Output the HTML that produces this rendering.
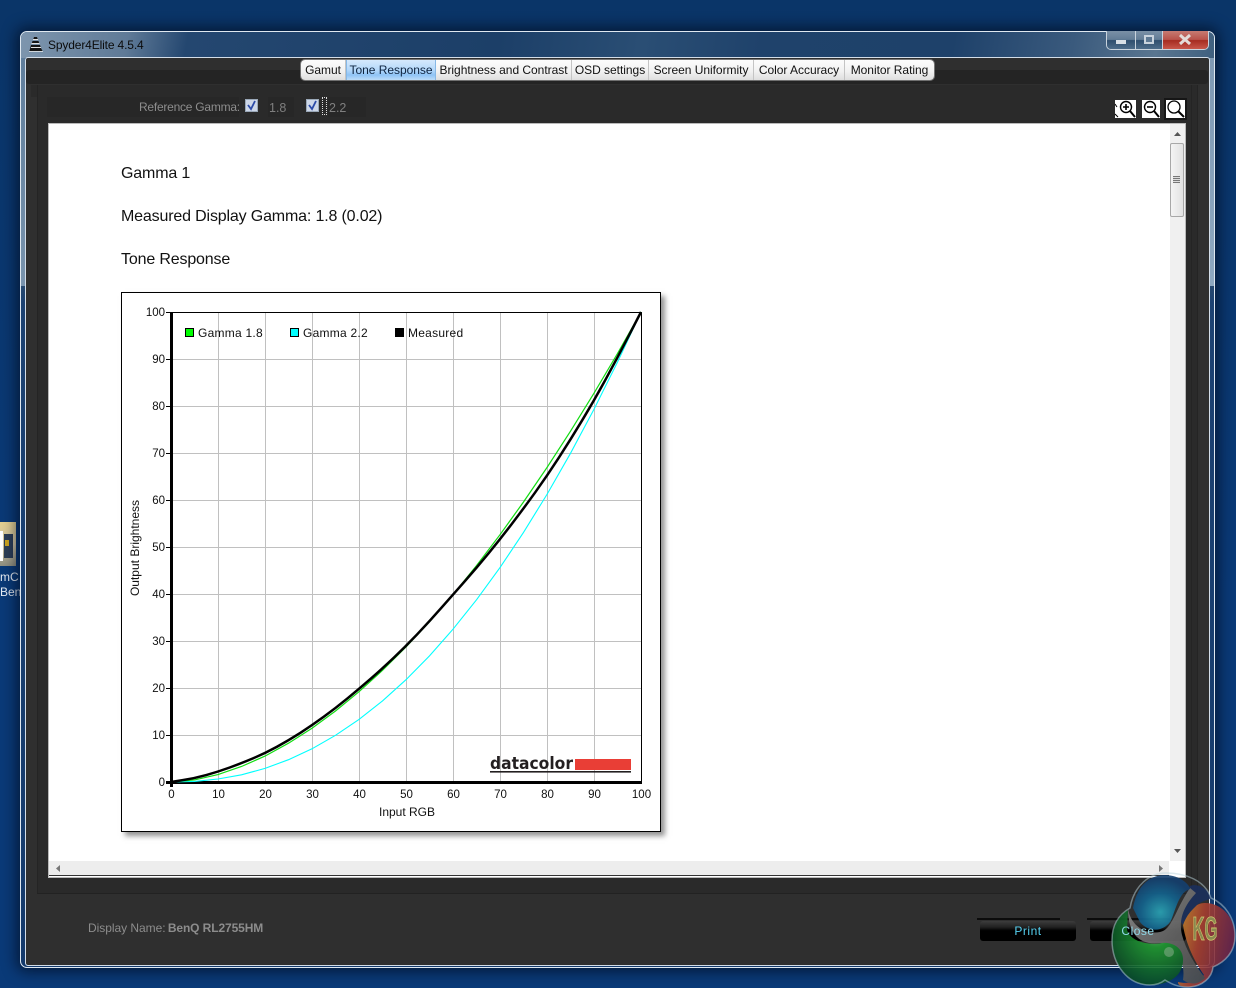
<!DOCTYPE html>
<html><head><meta charset="utf-8"><title>Spyder4Elite 4.5.4</title>
<style>
html,body{margin:0;padding:0;width:1236px;height:988px;overflow:hidden}
body{position:relative;background:linear-gradient(180deg,#0a3568 0,#0a3a78 60%,#0a3a78 100%);font-family:"Liberation Sans",sans-serif}
.a{position:absolute}
.t{position:absolute;white-space:nowrap}
.tab{position:absolute;top:0;height:20px;line-height:20px;text-align:center;font-size:12px;color:#111;letter-spacing:-.03px;border-right:1px solid #c4c4c4;box-sizing:border-box;background:linear-gradient(180deg,#fcfcfc 0,#f2f2f2 55%,#dedede 100%)}
.h{position:absolute;left:121px;font-size:16px;color:#111;white-space:nowrap;line-height:18px;letter-spacing:-.16px}
.zb{position:absolute;top:100px;height:18px;background:#fff}
</style></head><body>
<!-- icon on desktop -->
<div class="a" style="left:0;top:522px;width:16px;height:44px;background:linear-gradient(180deg,#e3cf8f,#cfc4a4 50%,#8f8f80)"></div>
<div class="a" style="left:0;top:531px;width:3px;height:30px;background:#fff"></div>
<div class="a" style="left:4px;top:534px;width:9px;height:24px;background:#2c3e56"></div>
<div class="a" style="left:5px;top:540px;width:4px;height:6px;background:#cda520"></div>
<div class="t" style="left:0;top:570px;font-size:12px;color:#e8eef5;line-height:14px">mC</div>
<div class="t" style="left:0;top:585px;font-size:12px;color:#e8eef5;line-height:14px">Ben</div>
<!-- window shadow -->
<div class="a" style="left:20px;top:31px;width:1195px;height:937px;border-radius:7px;box-shadow:0 0 14px 4px rgba(0,8,24,.62)"></div>
<!-- glass -->
<div class="a" style="left:20px;top:31px;width:1195px;height:937px;box-sizing:border-box;border-radius:7px;border:1px solid #dfe8f0;background:linear-gradient(180deg,#24476f 0,#27496f 27%,#1c4272 29%,#143a6c 100%)"></div>
<div class="a" style="left:21px;top:32px;width:1193px;height:26px;border-radius:6px 6px 0 0;background:linear-gradient(100deg,#7e96ae 0,#5f7a97 9%,#244770 14%,#1c3f68 40%,#2a4e74 52%,#1f426b 62%,#1e416a 78%,#3a5a7d 88%,#5a7690 95%,#3f607f 100%)"></div>
<div class="a" style="left:1209px;top:58px;width:5px;height:228px;background:linear-gradient(180deg,#7f9ab4,#8ea8c0)"></div>
<div class="a" style="left:21px;top:58px;width:4px;height:228px;background:linear-gradient(180deg,#5f7e9c,#7893ad)"></div>
<!-- title -->
<svg class="a" style="left:28px;top:36px" width="16" height="17" viewBox="0 0 16 17"><path d="M6 1h3l1 3H5zM4.500 5h6l1 3h-8zM3 9h9l1 3 2 4H1l1-3z" fill="#161616"/><path d="M5 3.500h5M3.500 7.500h8M3 11.500h10" stroke="#e2e2e2" stroke-width="1"/><path d="M1 15.500h14" stroke="#cfd6dc"/></svg>
<div class="t" style="left:48px;top:37px;font-size:12px;line-height:16px;color:#0b0b0b;letter-spacing:-.14px">Spyder4Elite 4.5.4</div>
<!-- window buttons -->
<div class="a" style="left:1106px;top:31px;width:103px;height:19px;border:1px solid #c9d3dd;border-top:0;box-sizing:border-box;border-radius:0 0 5px 5px;overflow:hidden;background:#456482">
 <div class="a" style="left:0;top:0;width:28px;height:18px;background:linear-gradient(180deg,#7a90a6 0,#627c96 48%,#2f4e6e 52%,#4d6c8a 100%);border-right:1px solid #c9d3dd"></div>
 <div class="a" style="left:29px;top:0;width:26px;height:18px;background:linear-gradient(180deg,#7a90a6 0,#627c96 48%,#2f4e6e 52%,#4d6c8a 100%);border-right:1px solid #c9d3dd"></div>
 <div class="a" style="left:56px;top:0;width:46px;height:18px;background:linear-gradient(180deg,#c77b72 0,#b9524a 48%,#a52b20 52%,#c8574a 100%)"></div>
 <div class="a" style="left:9px;top:9px;width:10px;height:4px;background:#d8dfe6"></div>
 <div class="a" style="left:37px;top:4px;width:6px;height:5px;border:2px solid #c8d2dc;background:#5d7893"></div>
 <svg class="a" style="left:71px;top:3px" width="14" height="11"><path d="M2 1l10 9M12 1L2 10" stroke="#e4dcd8" stroke-width="3"/></svg>
</div>
<!-- client -->
<div class="a" style="left:26px;top:58px;width:1183px;height:907px;box-sizing:border-box;background:#2f2f2f;outline:1px solid #d3dde8;border-radius:2px"></div>
<div class="a" style="left:26px;top:70px;width:1182px;height:14px;background:#242424;border-radius:3px"></div>
<div class="a" style="left:31px;top:85px;width:1161px;height:12px;background:#2a2a2a"></div>
<div class="a" style="left:37px;top:85px;width:1161px;height:808px;background:#2a2a2a;border-bottom:1px solid #222"></div>
<div class="a" style="left:1191px;top:85px;width:1px;height:806px;background:#242424"></div>
<div class="a" style="left:1197px;top:85px;width:1px;height:806px;background:#242424"></div>
<div class="a" style="left:37px;top:85px;width:1px;height:808px;background:#242424"></div>
<!-- tabs -->
<div class="a" style="left:301px;top:60px;width:633px;height:20px;border-radius:4px;overflow:hidden;box-shadow:0 0 0 1px rgba(255,255,255,.35)">
 <div class="tab" style="left:0;width:45px">Gamut</div>
 <div class="tab" style="left:45px;width:90px;color:#0e2440;background:linear-gradient(180deg,#d5e9fc 0,#b4d8fa 50%,#8fc4f6 75%,#bcdcf8 100%);border-right:1px solid #86b8e6;border-left:1px solid #86b8e6">Tone Response</div>
 <div class="tab" style="left:135px;width:136px">Brightness and Contrast</div>
 <div class="tab" style="left:271px;width:77px">OSD settings</div>
 <div class="tab" style="left:348px;width:105px">Screen Uniformity</div>
 <div class="tab" style="left:453px;width:91px">Color Accuracy</div>
 <div class="tab" style="left:544px;width:89px;border-right:0">Monitor Rating</div>
</div>
<!-- reference gamma -->
<div class="a" style="left:47px;top:97px;width:192px;height:20px;background:#272727"></div>
<div class="a" style="left:268px;top:97px;width:26px;height:20px;background:#272727"></div>
<div class="a" style="left:328px;top:97px;width:38px;height:20px;background:#272727"></div>
<div class="t" style="left:139px;top:99px;font-size:12px;line-height:16px;color:#8d8d8d;letter-spacing:-.24px">Reference Gamma:</div>
<div class="t" style="left:269px;top:100px;font-size:12.500px;line-height:16px;color:#7f7f7f">1.8</div>
<div class="t" style="left:329px;top:100px;font-size:12.500px;line-height:16px;color:#7f7f7f">2.2</div>
<svg class="a" style="left:245px;top:99px" width="13" height="13"><rect x=".5" y=".5" width="12" height="12" fill="#cdd7e8" stroke="#9aa8b8"/><path d="M3 6l3 4 4-8" fill="none" stroke="#2b4aa8" stroke-width="1.800"/></svg>
<svg class="a" style="left:306px;top:99px" width="13" height="13"><rect x=".5" y=".5" width="12" height="12" fill="#cdd7e8" stroke="#9aa8b8"/><path d="M3 6l3 4 4-8" fill="none" stroke="#2b4aa8" stroke-width="1.800"/></svg>
<div class="a" style="left:322px;top:97px;width:3px;height:16px;border:1px dotted #ddd"></div>
<!-- zoom buttons -->
<div class="zb" style="left:1115px;width:21px"><svg width="21" height="18"><path d="M0 14l3 3M0 4l2 3" stroke="#000"/><circle cx="11" cy="7" r="5.500" fill="none" stroke="#000" stroke-width="1.400"/><path d="M8 7h6M11 4v6" stroke="#000" stroke-width="1.600"/><path d="M15 11l5 6" stroke="#000" stroke-width="2"/></svg></div>
<div class="zb" style="left:1142px;width:18px"><svg width="18" height="18"><circle cx="8" cy="7" r="5.500" fill="none" stroke="#000" stroke-width="1.400"/><path d="M5 7h6" stroke="#000" stroke-width="1.600"/><path d="M12 11l5 6" stroke="#000" stroke-width="2"/></svg></div>
<div class="zb" style="left:1166px;width:19px;outline:2px solid #161616"><svg width="19" height="18"><circle cx="8" cy="7" r="6" fill="none" stroke="#000" stroke-width="1.300"/><path d="M12 11l6 6" stroke="#000" stroke-width="2"/></svg></div>
<!-- content -->
<div class="a" style="left:48px;top:123px;width:1138px;height:755px;background:#fff;border:1px solid #b9b9b9;box-sizing:border-box"></div>
<div class="a" style="left:49px;top:124px;width:1120px;height:737px;background:#fff;overflow:hidden"></div>
<div class="h" style="top:165px">Gamma 1</div>
<div class="h" style="top:208px">Measured Display Gamma: 1.8 (0.02)</div>
<div class="h" style="top:251px">Tone Response</div>
<!-- v scrollbar -->
<div class="a" style="left:1170px;top:124px;width:15px;height:737px;background:#f0f0f0"></div>
<svg class="a" style="left:1170px;top:124px" width="15" height="737"><path d="M4 12l3.500-4 3.500 4z" fill="#555"/><path d="M4 725l3.500 4 3.500-4z" fill="#555"/></svg>
<div class="a" style="left:1170px;top:143px;width:14px;height:74px;box-sizing:border-box;border:1px solid #a8a8a8;border-radius:2px;background:linear-gradient(90deg,#f4f4f4,#e2e2e2)"></div>
<div class="a" style="left:1173px;top:176px;width:7px;height:7px;background:repeating-linear-gradient(180deg,#777 0,#777 1px,#ddd 1px,#ddd 2px)"></div>
<!-- h scrollbar -->
<div class="a" style="left:49px;top:861px;width:1120px;height:15px;background:#ededed;border-bottom:1px solid #333;box-sizing:border-box"></div>
<svg class="a" style="left:50px;top:861px" width="1120" height="15"><path d="M10 4l-4 3.500 4 3.500z" fill="#777"/><path d="M1109 4l4 3.500-4 3.500z" fill="#777"/></svg>
<!-- chart -->
<div class="a" style="left:121px;top:292px;width:540px;height:540px;box-sizing:border-box;background:#fff;border:1px solid #000;box-shadow:4px 4px 5px rgba(60,60,60,.55)"></div>
<svg class="a" style="left:0;top:0" width="1236" height="988" font-family="'Liberation Sans',sans-serif" font-size="11.500" fill="#111">
 <g stroke="#c0c0c0" stroke-width="1" shape-rendering="crispEdges">
  <path d="M218.500 312V782M265.500 312V782M312.500 312V782M359.500 312V782M406.500 312V782M453.500 312V782M500.500 312V782M547.500 312V782M594.500 312V782"/>
  <path d="M171 359.500H641M171 406.500H641M171 453.500H641M171 500.500H641M171 547.500H641M171 594.500H641M171 641.500H641M171 688.500H641M171 735.500H641"/>
 </g>
 <g stroke="#000" shape-rendering="crispEdges">
  <path d="M166 312.500H641M641.500 312V783"/>
  <path d="M166 359.500h5M166 406.500h5M166 453.500h5M166 500.500h5M166 547.500h5M166 594.500h5M166 641.500h5M166 688.500h5M166 735.500h5M166 782.500h5"/>
  <path d="M171.500 312V787" stroke-width="3"/><path d="M166 782.500H642" stroke-width="3"/>
 </g>
 <polyline fill="none" stroke="#00ffff" stroke-width="1.100" points="171,782 194.500,781.400 218,779 241.500,774.800 265,768.400 288.500,759.700 312,748.800 335.500,735.300 359,719.400 382.500,700.900 406,679.700 429.500,655.900 453,629.200 476.500,599.800 500,567.600 523.500,532.400 547,494.400 570.500,453.300 594,409.200 617.500,362.100 641,312"/>
 <polyline fill="none" stroke="#11dd11" stroke-width="1.200" points="171,782 194.500,779.900 218,774.600 241.500,766.500 265,756.100 288.500,743.200 312,728.200 335.500,711 359,691.700 382.500,670.300 406,647 429.500,621.800 453,594.600 476.500,565.600 500,534.700 523.500,502 547,467.500 570.500,431.200 594,393.200 617.500,353.500 641,312"/>
 <path fill="none" stroke="#000" stroke-width="2.500" stroke-linejoin="round" d="M171 782L182.750 780.150Q194.500 778.300 206.250 775.050Q218 771.800 229.750 767.500Q241.500 763.200 253.250 758.250Q265 753.300 276.750 746.850Q288.500 740.400 300.250 732.900Q312 725.400 323.750 716.800Q335.500 708.200 347.250 698.550Q359 688.900 370.750 678.650Q382.500 668.400 394.250 657.250Q406 646.100 417.750 633.700Q429.500 621.300 441.250 607.950Q453 594.600 464.750 581.300Q476.500 568 488.250 553.700Q500 539.400 511.750 524Q523.500 508.600 535.250 492.300Q547 476 558.750 457.850Q570.500 439.700 582.250 420.200Q594 400.700 605.750 379.200Q617.500 357.700 629.250 334.850L641 312"/>
 <g text-anchor="end">
  <text x="165" y="316">100</text><text x="165" y="363">90</text><text x="165" y="410">80</text><text x="165" y="457">70</text><text x="165" y="504">60</text><text x="165" y="551">50</text><text x="165" y="598">40</text><text x="165" y="645">30</text><text x="165" y="692">20</text><text x="165" y="739">10</text><text x="165" y="786">0</text>
 </g>
 <g text-anchor="middle">
  <text x="171.500" y="798">0</text><text x="218.500" y="798">10</text><text x="265.500" y="798">20</text><text x="312.500" y="798">30</text><text x="359.500" y="798">40</text><text x="406.500" y="798">50</text><text x="453.500" y="798">60</text><text x="500.500" y="798">70</text><text x="547.500" y="798">80</text><text x="594.500" y="798">90</text><text x="641.500" y="798">100</text>
  <text x="407" y="816" font-size="12">Input RGB</text>
  <text transform="translate(139,548) rotate(-90)" font-size="12">Output Brightness</text>
 </g>
 <g shape-rendering="crispEdges">
  <rect x="185.500" y="328.500" width="8" height="8" fill="#00ff00" stroke="#000"/>
  <rect x="290.500" y="328.500" width="8" height="8" fill="#00ffff" stroke="#000"/>
  <rect x="395.500" y="328.500" width="8" height="8" fill="#000" stroke="#000"/>
 </g>
 <text x="198" y="337" font-size="12" letter-spacing=".25">Gamma 1.8</text>
 <text x="303" y="337" font-size="12" letter-spacing=".25">Gamma 2.2</text>
 <text x="408" y="337" font-size="12" letter-spacing=".25">Measured</text>
 <text x="490" y="769" font-family="'DejaVu Sans',sans-serif" font-size="17" font-weight="700" fill="#231f20" textLength="83" lengthAdjust="spacingAndGlyphs">datacolor</text>
 <rect x="575" y="759" width="56" height="11" fill="#e93e36"/>
 <rect x="490" y="771" width="141" height="1.600" fill="#231f20"/>
</svg>
<!-- bottom -->
<div class="t" style="left:88px;top:920px;font-size:12px;line-height:16px;color:#8c8c8c;letter-spacing:-.04px">Display Name: <b style="letter-spacing:-.1px;margin-left:-1px">BenQ RL2755HM</b></div>
<div class="a" style="left:977px;top:918px;width:83px;height:2px;background:#0c0c0c"></div>
<div class="a" style="left:980px;top:921px;width:96px;height:20px;border-radius:3px;background:linear-gradient(180deg,#3c3c3c 0,#222 30%,#000 48%,#000 100%)"></div>
<div class="t" style="left:980px;top:923px;width:96px;text-align:center;font-size:12px;line-height:16px;color:#55d0f0;letter-spacing:.5px">Print</div>
<div class="a" style="left:1087px;top:918px;width:83px;height:2px;background:#0c0c0c"></div>
<div class="a" style="left:1090px;top:921px;width:96px;height:20px;border-radius:3px;background:linear-gradient(180deg,#3c3c3c 0,#222 30%,#000 48%,#000 100%)"></div>
<!-- logo -->
<svg class="a" style="left:1106px;top:868px" width="130" height="120" viewBox="1106 868 130 120">
 <defs>
  <radialGradient id="gb" cx="48%" cy="68%" r="62%"><stop offset="0" stop-color="#2aa6b8"/><stop offset=".55" stop-color="#13648f"/><stop offset="1" stop-color="#14406f"/></radialGradient>
  <radialGradient id="gg" cx="62%" cy="30%" r="70%"><stop offset="0" stop-color="#6fb878"/><stop offset=".28" stop-color="#1f9a32"/><stop offset="1" stop-color="#0a4c26"/></radialGradient>
  <linearGradient id="gr" x1="0" y1="0" x2="1" y2=".3"><stop offset="0" stop-color="#c9922a"/><stop offset=".45" stop-color="#a7402f"/><stop offset="1" stop-color="#6d2445"/></linearGradient>
  <linearGradient id="gy" x1="0" y1="0" x2="1" y2="1"><stop offset="0" stop-color="#8c8c8c"/><stop offset="1" stop-color="#4c4c4c"/></linearGradient>
 </defs>
 <g opacity=".9">
 <path d="M1183 925C1186 912 1195 903 1205 903C1222 903 1235 918 1235 936C1235 952 1225 962 1213 967C1212 978 1202 986 1190 987C1180 987 1178 985 1178 982C1190 985 1198 980 1204 975C1195 962 1186 945 1183 925Z" fill="url(#gr)"/>
 <path d="M1190 886C1197 883 1208 888 1211 898C1207 901 1200 901 1196 906C1190 912 1187 915 1183 925L1176 915Z" fill="#1b2f5c"/>
 <path d="M1128 908C1130 925 1145 935 1160 932C1172 930 1175 910 1190 888L1196 893C1185 905 1178 918 1182 935C1186 950 1195 965 1205 978C1198 985 1190 985 1183 980C1186 960 1175 942 1160 943C1145 945 1128 940 1128 908Z" fill="url(#gy)"/>
 <path d="M1133 908C1137 885 1150 875 1165 875C1180 875 1190 885 1190 889C1180 892 1177 905 1172 918C1168 930 1150 935 1140 922Z" fill="url(#gb)"/>
 <path d="M1128 910C1118 915 1112 928 1112 940C1112 965 1128 985 1150 985C1170 985 1184 975 1183 958C1182 947 1172 942 1162 943C1145 946 1130 940 1127 930Z" fill="url(#gg)"/>
 <circle cx="1169" cy="952" r="5" fill="#9dc09f" opacity=".5"/>
 </g>
 <text x="1205" y="940" text-anchor="middle" font-family="'Liberation Sans',sans-serif" font-weight="700" font-size="33" fill="#8a8a50" stroke="#d6cc70" stroke-width=".8" textLength="25" lengthAdjust="spacingAndGlyphs">KG</text>
 <path d="M1112 940C1112 925 1118 915 1130 908C1134 885 1150 873 1166 873C1185 873 1205 880 1211 898C1225 904 1235 918 1235 936C1235 952 1225 962 1213 967C1212 978 1202 986 1190 987C1178 988 1170 983 1165 980C1160 984 1155 985 1150 985C1128 985 1112 965 1112 940Z" fill="none" stroke="#b9d3dc" stroke-opacity=".5" stroke-width="1.500"/>
</svg>
<div class="t" style="left:1090px;top:923px;width:96px;text-align:center;font-size:12px;line-height:16px;color:#8fd8e8;letter-spacing:.5px">Close</div>
</body></html>
